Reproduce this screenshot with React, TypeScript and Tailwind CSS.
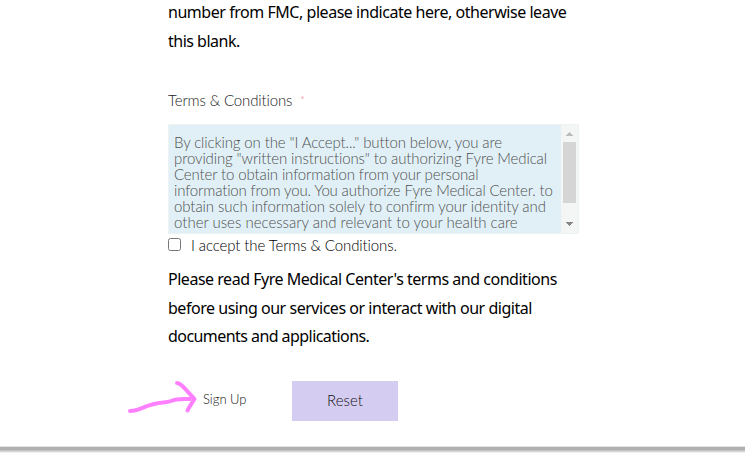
import React from 'react'

const termsLines = [
  { text: 'By clicking on the "I Accept..." button below, you are', className: 'tracking-[-0.12px]' },
  { text: 'providing "written instructions" to authorizing Fyre Medical', className: 'tracking-[-0.12px]' },
  { text: 'Center to obtain information from your personal', className: 'tracking-[-0.13px]' },
  { text: 'information from you. You authorize Fyre Medical Center. to', className: 'tracking-[-0.15px]' },
  { text: 'obtain such information solely to confirm your identity and', className: 'tracking-[-0.09px]' },
  { text: 'other uses necessary and relevant to your health care', className: 'tracking-[0px]' },
]

function Scrollbar() {
  return (
    <div className="flex w-[17px] flex-none flex-col items-center bg-[#f4f6f6]">
      <svg width="17" height="17" viewBox="0 0 17 17" shapeRendering="crispEdges">
        <path d="M5 11h7v-1h-1V9h-1V8H9V7H8v1H7v1H6v1H5z" fill="#bcbcbc" />
      </svg>
      <div className="h-[61px] w-[13px] bg-[#d5d5d5]" />
      <svg className="mt-auto" width="17" height="17" viewBox="0 0 17 17" shapeRendering="crispEdges">
        <path d="M5 6h7v1h-1v1h-1v1H9v1H8V9H7V8H6V7H5z" fill="#8a8585" />
      </svg>
    </div>
  )
}

function PointerArrow() {
  return (
    <svg
      className="h-[40px] w-[75px] flex-none"
      viewBox="0 0 75 40"
      fill="none"
      stroke="#ff80ff"
      strokeWidth="4"
      strokeLinecap="round"
      strokeLinejoin="round"
    >
      <path d="M6 30C15 30 20 25 30 23C38 21 42 22 47 20C54 17 59 18 66 18" />
      <path d="M53 2C57 2 62 9 70.500 18C68 22 65 26 63.500 29.500" />
    </svg>
  )
}

export default function App() {
  return (
    <div className="flex h-[473px] w-[745px] flex-col overflow-hidden bg-white font-['Noto_Sans',sans-serif] text-[16px] text-black">
      <main className="ml-[168px] flex h-[446px] w-[450px] flex-none flex-col whitespace-nowrap">
        <div className="-mt-[2px] leading-[28.5px]">
          <p className="tracking-[-0.46px]">number from FMC, please indicate here, otherwise leave</p>
          <p className="tracking-[-0.5px]">this blank.</p>
        </div>

        {/* Terms */}
        <div className="mt-[35px] flex h-[20px] items-center font-['Lato',sans-serif] text-[15px] font-light text-[#222222]">
          <label className="tracking-[-0.13px]">Terms &amp; Conditions</label>
          <span className="ml-2 text-[9px] text-[#ee4444]">*</span>
        </div>
        <div className="mt-[14px] flex h-[110px] w-[411px] border border-[#edf2f3] bg-[#e1f0f7]">
          <div className="flex-1 overflow-hidden pt-[9px] pl-[5px] font-['Lato',sans-serif] text-[15px] leading-[16px] font-light text-[#505050]">
            {termsLines.map((line) => (
              <p key={line.text} className={line.className}>{line.text}</p>
            ))}
          </div>
          <Scrollbar />
        </div>
        <div className="mt-[2px] flex h-[18px] items-center font-['Lato',sans-serif] text-[15px] font-light text-black">
          <input
            type="checkbox"
            className="mb-[1px] size-[13px] appearance-none rounded-[2.5px] border border-[#767676] bg-white"
          />
          <span className="ml-[10px] tracking-[-0.11px]">I accept the Terms &amp; Conditions.</span>
        </div>

        <div className="mt-[11px] leading-[28.5px]">
          <p className="tracking-[-0.48px]">Please read Fyre Medical Center&apos;s terms and conditions</p>
          <p className="tracking-[-0.47px]">before using our services or interact with our digital</p>
          <p className="tracking-[-0.56px]">documents and applications.</p>
        </div>

        {/* Actions */}
        <div className="mt-[30px] -ml-[44px] flex h-[40px] items-center font-['Lato',sans-serif] font-light">
          <PointerArrow />
          <button className="mb-[2px] ml-[4px] w-[89px] text-left text-[13px] text-[#111111]">Sign Up</button>
          <button className="h-[40px] w-[106px] bg-[#d5cdf1] text-[15px] text-[#111111]">Reset</button>
        </div>
      </main>

      <div className="flex-none">
        <div className="h-[1px] bg-[#e4e4e4]" />
        <div className="h-[3px] bg-[#b0b0b0]" />
        <div className="h-[1px] bg-[#c4c4c4]" />
        <div className="h-[1px] bg-[#d8d8d8]" />
        <div className="h-[1px] bg-[#f0f0f0]" />
      </div>
    </div>
  )
}
